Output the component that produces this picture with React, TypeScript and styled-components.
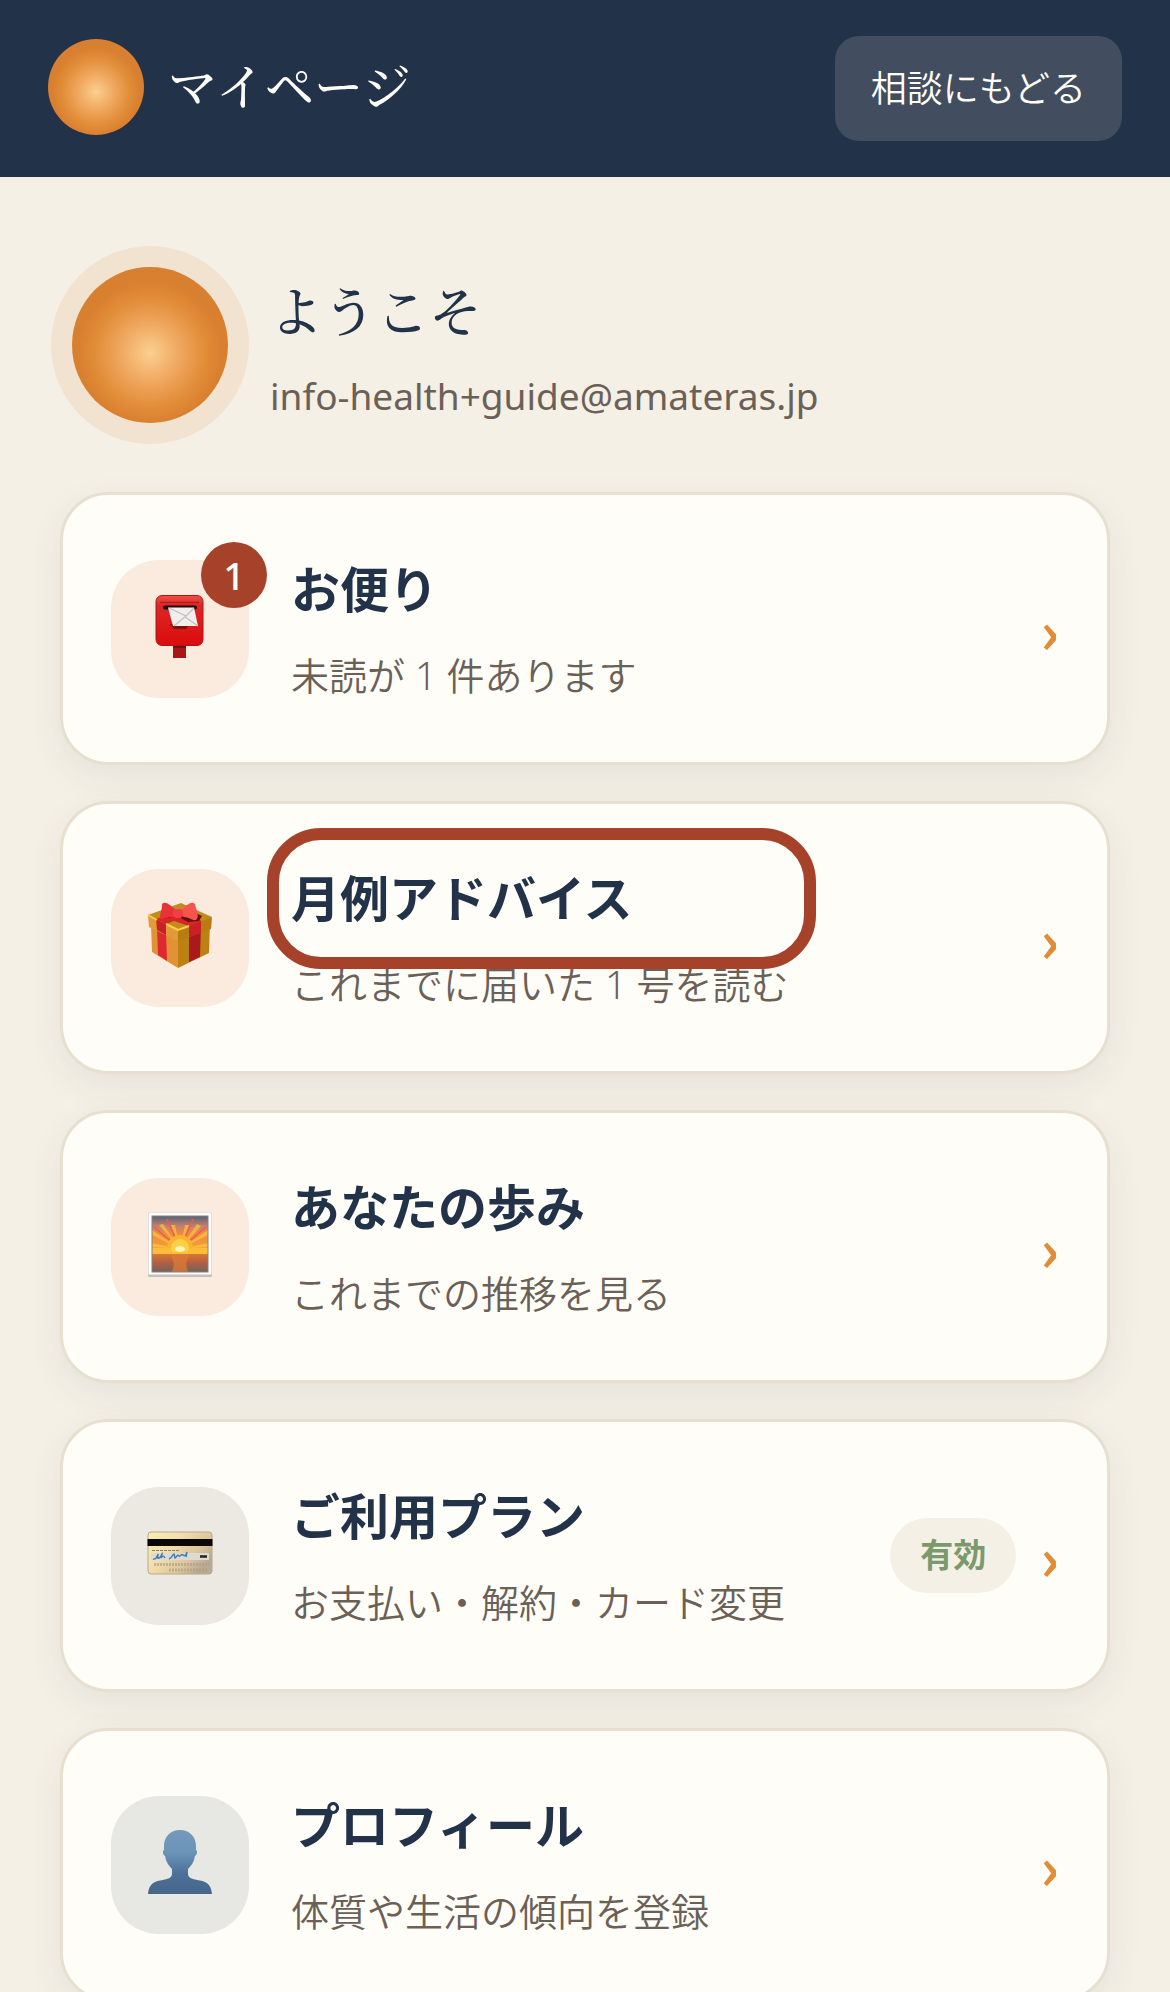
import React from 'react';
import styled, { createGlobalStyle } from 'styled-components';

const GlobalStyle = createGlobalStyle`
  *, *::before, *::after { box-sizing: border-box; }
  body {
    margin: 0;
    background: #f5f0e6;
    color: #223248;
    font-family: "Noto Sans CJK JP", sans-serif;
    font-weight: 400;
  }
`;

const Header = styled.header`
  display: flex;
  align-items: center;
  justify-content: space-between;
  padding: 36px 48px;
  background: #223248;
`;

const Brand = styled.div`
  display: flex;
  align-items: center;
  gap: 24px;
  margin-bottom: 3px;
`;

const Sun = styled.span<{ $size: number; $ring?: boolean }>`
  flex: none;
  width: ${(p) => p.$size}px;
  height: ${(p) => p.$size}px;
  border-radius: 50%;
  background: radial-gradient(circle at 50% 55%, #fad090 0%, #f0a860 25%, #e18c37 48%, #d97f30 62%);
  box-shadow: ${(p) => (p.$ring ? '0 0 0 21px rgba(226, 128, 64, 0.13)' : 'none')};
`;

const PageTitle = styled.h1`
  margin: 0;
  padding-bottom: 6px;
  color: #fefdf8;
  font-family: "Noto Serif CJK JP", "Noto Sans CJK JP", serif;
  font-size: 49px;
  font-weight: 500;
  line-height: 72px;
`;

const BackButton = styled.button`
  padding: 22px 36px 26px;
  border: 0;
  border-radius: 24px;
  background: #424d5f;
  color: #fefdf8;
  font: inherit;
  font-size: 36px;
  font-weight: 350;
  line-height: 57px;
`;

const Main = styled.main`
  display: flex;
  flex-direction: column;
  gap: 60px;
  padding: 90px 60px;
`;

const Welcome = styled.section`
  display: flex;
  align-items: flex-start;
  gap: 42px;
  padding: 0 12px;
`;

const WelcomeText = styled.div`
  display: flex;
  flex-direction: column;
  gap: 9px;
`;

const Greeting = styled.h2`
  margin: 0;
  font-family: "Noto Serif CJK JP", "Noto Sans CJK JP", serif;
  font-size: 53px;
  font-weight: 500;
  line-height: 84px;
`;

const Email = styled.p`
  margin: 0;
  color: #6b6056;
  font-family: "Noto Sans", "Noto Sans CJK JP", sans-serif;
  font-size: 37px;
  font-weight: 400;
  line-height: 72px;
`;

const Menu = styled.nav`
  display: flex;
  flex-direction: column;
  gap: 36px;
`;

const Card = styled.a`
  display: flex;
  align-items: center;
  padding: 48px;
  border: 3px solid #e7dfd0;
  border-radius: 48px;
  background: #fefdf8;
  box-shadow: 0 12px 36px rgba(34, 50, 72, 0.07);
  color: inherit;
  text-decoration: none;
`;

const Tile = styled.span<{ $tint: string }>`
  position: relative;
  flex: none;
  display: flex;
  align-items: center;
  justify-content: center;
  width: 138px;
  height: 138px;
  padding-bottom: 6px;
  border-radius: 48px;
  background: ${(p) => p.$tint};

  svg { display: block; width: 66px; height: 66px; }
`;

const Badge = styled.span`
  position: absolute;
  top: -18px;
  right: -18px;
  width: 66px;
  height: 66px;
  border-radius: 50%;
  background: #a6412a;
  color: #fefdf8;
  font-family: "Noto Sans", "Noto Sans CJK JP", sans-serif;
  font-size: 38px;
  font-weight: 500;
  line-height: 66px;
  text-align: center;
`;

const CardText = styled.span`
  position: relative;
  flex: 1;
  display: flex;
  flex-direction: column;
  align-items: flex-start;
  gap: 8px;
  margin-left: 42px;
  padding-bottom: 3px;
`;

const CardTitle = styled.span`
  font-size: 49px;
  font-weight: 700;
  line-height: 88px;
`;

const CardNote = styled.span`
  color: #6b6056;
  font-family: "Noto Sans", "Noto Sans CJK JP", sans-serif;
  font-size: 38px;
  font-weight: 350;
  line-height: 72px;
`;

const Highlight = styled.span`
  position: absolute;
  top: -24px;
  left: -24px;
  width: 549px;
  height: 141px;
  border: 12px solid #a6412a;
  border-radius: 54px;
`;

const Pill = styled.span`
  padding: 0 30px 4px;
  border-radius: 39px;
  background: #f5f0e6;
  color: #7a9a6d;
  font-size: 33px;
  font-weight: 700;
  line-height: 71px;
`;

const Chevron = styled.span`
  margin-left: 24px;
  color: #e18c37;
  font-size: 58px;
  font-weight: 700;
  line-height: 72px;
`;

const MailIcon = () => (
  <svg viewBox="0 0 66 66" aria-hidden="true">
    <defs>
      <linearGradient id="box" x1="0" y1="0" x2="0" y2="1">
        <stop offset="0" stopColor="#ee5148" />
        <stop offset=".2" stopColor="#dc2626" />
        <stop offset="1" stopColor="#db0c0c" />
      </linearGradient>
    </defs>
    <rect x="26" y="50" width="13" height="15" fill="#a81717" />
    <rect x="26" y="50" width="13" height="5" fill="#6e130d" />
    <rect x="9" y="2.500" width="47" height="50" rx="6" fill="url(#box)" stroke="#b01515" />
    <path d="M13 9.500h39" stroke="#b81c18" strokeWidth="1.500" />
    <rect x="16" y="12.500" width="34" height="4" rx="2" fill="#1c0705" />
    <path d="M23 31l4 5h12l4-5z" fill="#7d120d" />
    <path d="M21 14.500h26l4 18.500H26z" fill="#f0efed" />
    <path d="M22 15l17 8-12 10M39 23l8-8M51 33l-13-9" fill="none" stroke="#c2bfbd" strokeWidth="1.200" />
  </svg>
);

const GiftIcon = () => (
  <svg viewBox="0 0 66 66" aria-hidden="true">
    <path d="M4 22l27 12v32L5 50z" fill="#e39136" />
    <path d="M31 34l32-14-1 31-31 15z" fill="#bd8013" />
    <path d="M10 25l9 4 1 30-9-6z" fill="#dd2a30" />
    <path d="M42 29l12-5-1 31-11 5z" fill="#a81a1c" />
    <path d="M1 13L34 1l31 14-34 15z" fill="#c28c1b" />
    <path d="M1 13l30 15v11L2 25z" fill="#e39a38" />
    <path d="M31 28l34-13-1 12-33 12z" fill="#b77c12" />
    <path d="M9 17l10 5v11l-9-5zM42 24l12-5v12l-12 4z" fill="#c82027" />
    <path d="M9 17l20-7 26 9-13 5-15-5-8 3z" fill="#d92429" />
    <path d="M15 17l15-3 11 6 11-1 3-5-10-5-18 3z" fill="#651509" />
    <path d="M1 13l9 5M19 22l12 6 11-4" fill="none" stroke="#ffcb48" strokeWidth="2" />
    <path d="M15 2c4-4 10 3 14 6 1 3 0 6-3 7-5 0-9 2-12 2-3-4 2-9 1-15z" fill="#e83236" />
    <path d="M48 2c-4-4-10 3-14 6-1 3 0 6 3 7 5 0 9 4 12 3 4-4 0-10-1-16z" fill="#f75450" />
    <rect x="26" y="7" width="10" height="9" rx="4" fill="#f04045" />
  </svg>
);

const SunriseIcon = () => (
  <svg viewBox="0 0 66 66" aria-hidden="true">
    <defs>
      <linearGradient id="sky" x1="0" y1="0" x2="0" y2="1">
        <stop offset="0" stopColor="#53637a" />
        <stop offset=".18" stopColor="#c77f6c" />
        <stop offset=".32" stopColor="#ef8b42" />
        <stop offset=".66" stopColor="#f5a52f" />
      </linearGradient>
      <linearGradient id="sea" x1="0" y1="0" x2="0" y2="1">
        <stop offset="0" stopColor="#d8782f" />
        <stop offset=".45" stopColor="#b65f43" />
        <stop offset="1" stopColor="#706358" />
      </linearGradient>
    </defs>
    <rect x="1" y="1" width="64" height="65" rx="1" fill="#c4c0bc" />
    <rect x="1.500" y="1.500" width="63" height="62" fill="#fff" />
    <rect x="5" y="5" width="56" height="56" fill="url(#sky)" />
    <path
      d="M33 38L5 19v5zM33 38L5 32v4zM33 38L12 14l4-1zM33 38L24 14h4zM33 38L38 14h4zM33 38L50 13l4 2zM33 38L61 19v5zM33 38L61 32v4z"
      fill="#ffc43d"
      opacity=".7"
    />
    <path d="M33 38L7 16M33 38L20 8M33 38L46 8M33 38L59 16" stroke="#f45a49" strokeWidth="1.500" />
    <circle cx="33" cy="37" r="13" fill="#fbb432" />
    <circle cx="33" cy="37" r="9" fill="#ffd047" />
    <ellipse cx="33" cy="38" rx="5" ry="3" fill="#fff5b5" />
    <rect x="5" y="43" width="56" height="18" fill="url(#sea)" />
    <path d="M5 37h18l3 4h14l3-4h18v6H5z" fill="#fbbd3a" />
    <path d="M24 43h18l-3 10 2 8H25l2-8z" fill="#de7a35" opacity=".75" />
    <rect x="5" y="5" width="56" height="56" fill="none" stroke="#8a8077" />
  </svg>
);

const CreditCardIcon = () => (
  <svg viewBox="0 0 66 66" aria-hidden="true">
    <defs>
      <linearGradient id="gold" x1="0" y1="0" x2="1" y2=".6">
        <stop offset="0" stopColor="#f8efb4" />
        <stop offset=".4" stopColor="#f3dfae" />
        <stop offset=".75" stopColor="#dec79b" />
        <stop offset="1" stopColor="#b9aa94" />
      </linearGradient>
    </defs>
    <rect x="1" y="12" width="64" height="42" rx="3" fill="url(#gold)" stroke="#b9a88b" />
    <rect x=".5" y="19" width="65" height="7" fill="#0b0704" />
    <path d="M5 30.500h27" stroke="#8a8070" strokeDasharray="3 1" />
    <rect x="4" y="33" width="58" height="7" fill="#dcdad1" />
    <path
      d="M6 39c4 1 4-3 5-5 0 3-1 5 1 4s2-3 3-4l-1 4c2-3 3-2 4 0M22 39c3-1 4-5 5-5s0 3 1 4l2-2c1-2 2 1 3 0s1-2 3-1 2 2 4-3l-1 5"
      fill="none"
      stroke="#437db0"
      strokeWidth="1.400"
    />
    <path d="M53 36.500h7" stroke="#28211c" strokeWidth="2.500" />
    <path d="M7 44.500h55M22 50h39" stroke="#aa9e8a" strokeWidth="3" strokeDasharray="2 1" opacity=".65" />
  </svg>
);

const PersonIcon = () => (
  <svg viewBox="0 0 66 66" aria-hidden="true">
    <defs>
      <linearGradient id="person" x1="0" y1="0" x2="0" y2="1">
        <stop offset="0" stopColor="#749abb" />
        <stop offset=".35" stopColor="#6c94b9" />
        <stop offset=".68" stopColor="#4c7199" />
        <stop offset="1" stopColor="#466588" />
      </linearGradient>
    </defs>
    <path
      d="M33 1c10 0 16 7 16 16v4c2 1 1 5-1 6-1 6-4 10-7 13v5c0 4 5 5 9 6 8 1 14 3 15 14H1c1-11 7-13 15-14 4-1 9-2 9-6v-5c-3-3-6-7-7-13-2-1-3-5-1-6v-4C17 8 23 1 33 1z"
      fill="url(#person)"
    />
  </svg>
);

interface Item {
  title: string;
  note: string;
  tint: string;
  icon: React.ReactNode;
  badge?: string;
  pill?: string;
  highlighted?: boolean;
}

const items: Item[] = [
  { title: 'お便り', note: '未読が 1 件あります', tint: '#fbebde', icon: <MailIcon />, badge: '1' },
  { title: '月例アドバイス', note: 'これまでに届いた 1 号を読む', tint: '#fbebde', icon: <GiftIcon />, highlighted: true },
  { title: 'あなたの歩み', note: 'これまでの推移を見る', tint: '#fbebde', icon: <SunriseIcon /> },
  { title: 'ご利用プラン', note: 'お支払い・解約・カード変更', tint: '#ebe9e2', icon: <CreditCardIcon />, pill: '有効' },
  { title: 'プロフィール', note: '体質や生活の傾向を登録', tint: '#e7e8e4', icon: <PersonIcon /> },
];

export default function App() {
  return (
    <>
      <GlobalStyle />
      <Header>
        <Brand>
          <Sun $size={96} />
          <PageTitle>マイページ</PageTitle>
        </Brand>
        <BackButton type="button">相談にもどる</BackButton>
      </Header>
      <Main>
        <Welcome>
          <Sun $size={156} $ring />
          <WelcomeText>
            <Greeting>ようこそ</Greeting>
            <Email>info-health+guide@amateras.jp</Email>
          </WelcomeText>
        </Welcome>
        <Menu>
          {items.map((item) => (
            <Card key={item.title} href="#">
              <Tile $tint={item.tint}>
                {item.icon}
                {item.badge && <Badge>{item.badge}</Badge>}
              </Tile>
              <CardText>
                <CardTitle>{item.title}</CardTitle>
                <CardNote>{item.note}</CardNote>
                {item.highlighted && <Highlight />}
              </CardText>
              {item.pill && <Pill>{item.pill}</Pill>}
              <Chevron aria-hidden="true">›</Chevron>
            </Card>
          ))}
        </Menu>
      </Main>
    </>
  );
}
